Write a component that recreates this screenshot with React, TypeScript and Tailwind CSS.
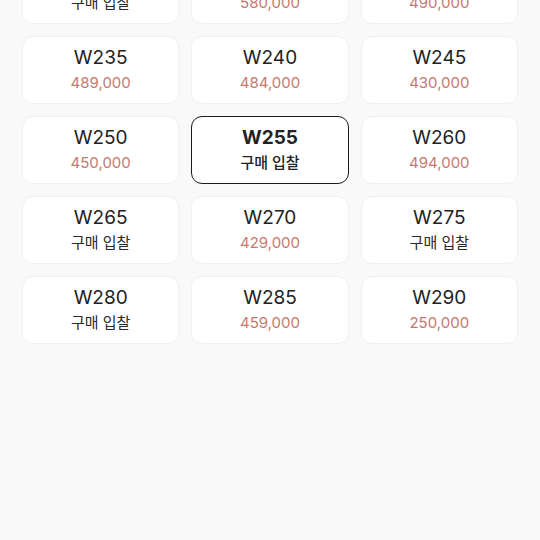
const sizes: { size: string; price?: string }[] = [
  { size: "W220" },
  { size: "W225", price: "580,000" },
  { size: "W230", price: "490,000" },
  { size: "W235", price: "489,000" },
  { size: "W240", price: "484,000" },
  { size: "W245", price: "430,000" },
  { size: "W250", price: "450,000" },
  { size: "W255" },
  { size: "W260", price: "494,000" },
  { size: "W265" },
  { size: "W270", price: "429,000" },
  { size: "W275" },
  { size: "W280" },
  { size: "W285", price: "459,000" },
  { size: "W290", price: "250,000" },
];

const SELECTED = "W255";

export default function App() {
  return (
    <div className="h-[540px] overflow-hidden bg-[#f9f9f9] font-['Inter','Noto_Sans_CJK_KR',sans-serif] text-[#222]">
      <div className="-mt-[44px] grid grid-cols-3 gap-3 px-[22px]">
        {sizes.map((s) => {
          const selected = s.size === SELECTED;
          return (
            <div
              key={s.size}
              className={
                selected
                  ? "flex h-[68px] flex-col items-center justify-center rounded-[11px] border-[1.5px] border-[#1a1a1a] bg-white"
                  : "flex h-[68px] flex-col items-center justify-center rounded-[11px] border border-[#f0f0f0] bg-white"
              }
            >
              <span className={selected ? "text-[19px] leading-[24px] font-bold" : "text-[19px] leading-[24px]"}>
                {s.size}
              </span>
              {s.price ? (
                <span className="mt-[2px] text-[15px] leading-[22px] text-[#c5786d]">{s.price}</span>
              ) : (
                <span
                  className={
                    selected
                      ? "mt-[2px] text-[15px] leading-[22px] font-medium"
                      : "mt-[2px] text-[15px] leading-[22px] text-[#2a2a2a]"
                  }
                >
                  구매 입찰
                </span>
              )}
            </div>
          );
        })}
      </div>
    </div>
  );
}
